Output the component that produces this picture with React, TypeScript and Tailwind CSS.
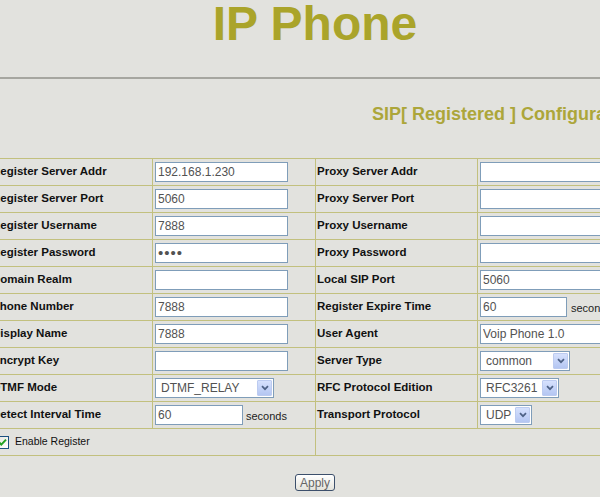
import type { ReactNode } from 'react'

type Field =
  | { kind: 'text'; value: string; dots?: boolean }
  | { kind: 'select'; value: string; width: string }
  | { kind: 'seconds'; value: string; width: string; gap: string }

type Row = { left: string; leftField: Field; right: string; rightField: Field }

const rows: Row[] = [
  { left: 'Register Server Addr', leftField: { kind: 'text', value: '192.168.1.230' }, right: 'Proxy Server Addr', rightField: { kind: 'text', value: '' } },
  { left: 'Register Server Port', leftField: { kind: 'text', value: '5060' }, right: 'Proxy Server Port', rightField: { kind: 'text', value: '' } },
  { left: 'Register Username', leftField: { kind: 'text', value: '7888' }, right: 'Proxy Username', rightField: { kind: 'text', value: '' } },
  { left: 'Register Password', leftField: { kind: 'text', value: '••••', dots: true }, right: 'Proxy Password', rightField: { kind: 'text', value: '' } },
  { left: 'Domain Realm', leftField: { kind: 'text', value: '' }, right: 'Local SIP Port', rightField: { kind: 'text', value: '5060' } },
  { left: 'Phone Number', leftField: { kind: 'text', value: '7888' }, right: 'Register Expire Time', rightField: { kind: 'seconds', value: '60', width: 'w-[87px]', gap: 'ml-[4px]' } },
  { left: 'Display Name', leftField: { kind: 'text', value: '7888' }, right: 'User Agent', rightField: { kind: 'text', value: 'Voip Phone 1.0' } },
  { left: 'Encrypt Key', leftField: { kind: 'text', value: '' }, right: 'Server Type', rightField: { kind: 'select', value: 'common', width: 'w-[90px]' } },
  { left: 'DTMF Mode', leftField: { kind: 'select', value: 'DTMF_RELAY', width: 'w-[119px]' }, right: 'RFC Protocol Edition', rightField: { kind: 'select', value: 'RFC3261', width: 'w-[79px]' } },
  { left: 'Detect Interval Time', leftField: { kind: 'seconds', value: '60', width: 'w-[88px]', gap: 'ml-[3px]' }, right: 'Transport Protocol', rightField: { kind: 'select', value: 'UDP', width: 'w-[52px]' } },
]

const cell = 'flex h-[27px] items-center border-r border-b border-[#c2c07e]'

function TextBox({ value, width = 'w-[133px]', dots }: { value: string; width?: string; dots?: boolean }) {
  return (
    <input
      readOnly
      value={value}
      className={`h-[20px] ${width} border border-[#7f9db9] bg-white px-[2px] text-[#525252] outline-none ${dots ? 'text-[15px] tracking-[1px] text-[#5a5a5a]' : 'text-[12px]'}`}
    />
  )
}

function SelectBox({ value, width }: { value: string; width: string }) {
  return (
    <div className={`flex h-[20px] ${width} items-center border border-[#7f9db9] bg-white pl-[5px] pr-[1px] text-[12px] text-[#525252]`}>
      <span className="flex-1 leading-none">{value}</span>
      <span className="flex h-[16px] w-[15px] items-center justify-center rounded-[1px] border border-[#bccbf0] bg-gradient-to-b from-[#d6e1fd] to-[#b4c6f2]">
        <svg width="8" height="6" viewBox="0 0 8 6">
          <path d="M1 1.2 L4 4.2 L7 1.2" fill="none" stroke="#4d6185" strokeWidth="1.7" />
        </svg>
      </span>
    </div>
  )
}

function FieldView({ field }: { field: Field }) {
  switch (field.kind) {
    case 'select':
      return <SelectBox value={field.value} width={field.width} />
    case 'seconds':
      return (
        <>
          <TextBox value={field.value} width={field.width} />
          <span className={`${field.gap} pt-[3px] text-[11px] text-[#222]`}>seconds</span>
        </>
      )
    default:
      return <TextBox value={field.value} dots={field.dots} />
  }
}

function Label({ children }: { children: ReactNode }) {
  return <span className="whitespace-nowrap pl-[1px] text-[11.5px] font-bold text-[#111]">{children}</span>
}

export default function App() {
  return (
    <div className="h-[497px] w-[600px] overflow-hidden bg-[#e2e2de] font-['Liberation_Sans',Arial,sans-serif]">
      <div className="-ml-[10px] w-[650px]">
        <h1 className="text-center text-[48px] leading-[48px] font-bold text-[#aaa42a]">IP Phone</h1>
        <div className="mt-[29px] h-[2px] bg-[#a6a6a0]" />
        <div className="mt-[24px] whitespace-nowrap pr-[1px] text-right text-[18px] leading-[22px] font-bold text-[#aca63a]">
          SIP[ Registered ] Configuration
        </div>

        <div className="mt-[33px] grid w-max grid-cols-[162px_163px_162px_163px] border-t border-l border-[#c2c07e]">
          {rows.map((r) => (
            <div key={r.left} className="contents">
              <div className={cell}>
                <Label>{r.left}</Label>
              </div>
              <div className={`${cell} pl-[2px]`}>
                <FieldView field={r.leftField} />
              </div>
              <div className={cell}>
                <Label>{r.right}</Label>
              </div>
              <div className={`${cell} pl-[2px]`}>
                <FieldView field={r.rightField} />
              </div>
            </div>
          ))}
          <div className={`${cell} col-span-2 pl-[5px]`}>
            <span className="flex h-[13px] w-[13px] items-center justify-center border border-[#1c5180] bg-gradient-to-br from-[#e6e6e0] to-white">
              <svg width="11" height="11" viewBox="0 0 11 11">
                <path d="M2 5.2 L4.3 7.6 L9 2.6" fill="none" stroke="#21a121" strokeWidth="2" />
              </svg>
            </span>
            <span className="ml-[6px] text-[10.5px] text-[#111]">Enable Register</span>
          </div>
          <div className={`${cell} col-span-2`} />
        </div>

        <div className="mt-[18px] flex justify-center">
          <button className="h-[17px] w-[40px] rounded-[3px] border border-[#3c4f6b] bg-gradient-to-b from-white to-[#e4e3dc] text-[12px] leading-none text-[#666]">
            Apply
          </button>
        </div>
      </div>
    </div>
  )
}
